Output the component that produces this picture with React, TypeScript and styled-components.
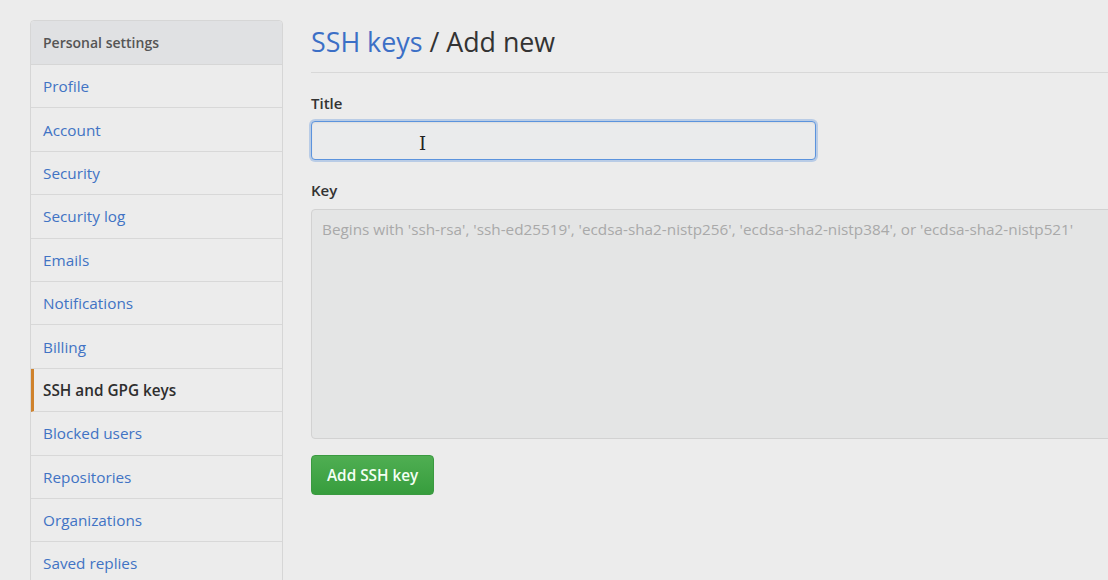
import React from "react";
import styled, { createGlobalStyle } from "styled-components";

const GlobalStyle = createGlobalStyle`
html, body {
  margin: 0;
  padding: 0;
  background: #ececec;
  font-family: "Open Sans", "Noto Sans", "Liberation Sans", sans-serif;
}
`;

const Page = styled.div`
display: flex;
align-items: flex-start;
gap: 28px;
padding: 20px 0 0 30px;
height: 560px;
overflow: hidden;
`;

const Sidebar = styled.nav`
width: 253px;
box-sizing: border-box;
flex-shrink: 0;
border: 1px solid #d6d6d6;
border-radius: 4px;
background: #ececec;
`;

const SidebarHeader = styled.div`
height: 43px;
display: flex;
align-items: center;
padding-left: 12px;
background: #e0e1e3;
border-bottom: 1px solid #d6d6d6;
border-radius: 4px 4px 0 0;
font-size: 14px;
font-weight: 600;
color: #555;
`;

const NavItem = styled.a<{ $active?: boolean }>`
display: flex;
align-items: center;
height: 42.4px;
padding-left: ${p => (p.$active ? "9px" : "12px")};
border-bottom: 1px solid #d8d8d8;
border-left: ${p => (p.$active ? "3px solid #cf822c" : "none")};
font-size: 15.3px;
color: ${p => (p.$active ? "#2e2e2e" : "#4173c4")};
font-weight: ${p => (p.$active ? 600 : 400)};
text-decoration: none;
`;

const Main = styled.main`
flex: 1;
min-width: 0;
`;

const Heading = styled.h2`
margin: 0;
padding: 4px 0 12px;
font-size: 26.8px;
font-weight: 400;
color: #333;
border-bottom: 1px solid #d8d8d8;
line-height: 36px;
`;

const Crumb = styled.a`
color: #3b6fc6;
text-decoration: none;
`;

const Form = styled.form`
display: flex;
flex-direction: column;
padding-top: 20px;
`;

const Label = styled.label`
font-size: 15px;
font-weight: 600;
color: #333;
margin-bottom: 8px;
`;

const TitleInput = styled.div`
width: 505px;
height: 39px;
box-sizing: border-box;
border: 1px solid #5b93dd;
border-radius: 4px;
background: #eaebec;
box-shadow: 0 0 0 2px rgba(91, 147, 221, 0.35), inset 0 1px 2px rgba(0,0,0,0.06);
margin-bottom: 20px;
position: relative;
`;

const Caret = styled.span`
position: absolute;
left: 107px;
top: 13px;
font-family: "DejaVu Serif", serif;
font-size: 18px;
line-height: 18px;
color: #222;
`;

const KeyArea = styled.div`
width: 820px;
height: 230px;
box-sizing: border-box;
border: 1px solid #d2d2d2;
border-radius: 4px;
background: #e4e5e5;
margin-top: 1px;
padding: 9px 10px;
font-size: 15.3px;
color: #a9a9a9;
white-space: nowrap;
margin-bottom: 16px;
`;

const GreenButton = styled.button`
align-self: flex-start;
height: 40px;
padding: 0 15px;
border: 1px solid #3a9a40;
border-radius: 4px;
background: linear-gradient(#4fae52, #379d3d);
color: #f4fff4;
font-family: inherit;
font-size: 15.3px;
font-weight: 600;
`;

const navItems = [
  "Profile",
  "Account",
  "Security",
  "Security log",
  "Emails",
  "Notifications",
  "Billing",
  "SSH and GPG keys",
  "Blocked users",
  "Repositories",
  "Organizations",
  "Saved replies",
];

export default function App() {
  return (
    <>
      <GlobalStyle />
      <Page>
        <Sidebar>
          <SidebarHeader>Personal settings</SidebarHeader>
          {navItems.map(item => (
            <NavItem key={item} $active={item === "SSH and GPG keys"}>
              {item}
            </NavItem>
          ))}
        </Sidebar>
        <Main>
          <Heading>
            <Crumb>SSH keys</Crumb> / Add new
          </Heading>
          <Form>
            <Label>Title</Label>
            <TitleInput>
              <Caret>I</Caret>
            </TitleInput>
            <Label>Key</Label>
            <KeyArea>
              Begins with 'ssh-rsa', 'ssh-ed25519', 'ecdsa-sha2-nistp256', 'ecdsa-sha2-nistp384', or 'ecdsa-sha2-nistp521'
            </KeyArea>
            <GreenButton type="button">Add SSH key</GreenButton>
          </Form>
        </Main>
      </Page>
    </>
  );
}
